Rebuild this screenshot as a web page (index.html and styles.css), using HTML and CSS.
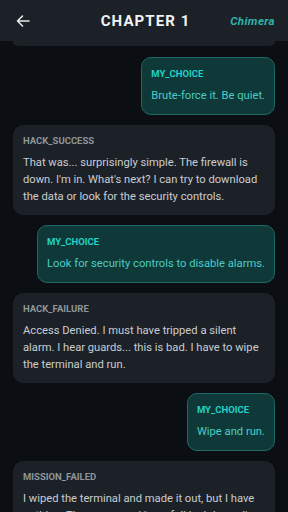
FILE: index.html
```html
<!DOCTYPE html>
<html>

<head>
  <meta charset="UTF-8">
  <title>Chapter 1</title>
  <link rel="stylesheet" href="styles.css">
</head>

<body>
  <div class="header">
    <a class="back">
      <svg width="16" height="16" viewBox="0 0 16 16">
        <path d="M14 8H2.5M7.5 3L2.5 8l5 5" fill="none" stroke="#e6e9ec" stroke-width="1.6" stroke-linecap="round" stroke-linejoin="round"/>
      </svg>
    </a>
    <div class="title">CHAPTER 1</div>
    <div class="brand">Chimera</div>
  </div>
  <div class="feed">
    <div class="card card-tail"></div>
    <div class="choice">
      <div class="label">MY_CHOICE</div>
      <div class="text">Brute-force it. Be quiet.</div>
    </div>
    <div class="card">
      <div class="label">HACK_SUCCESS</div>
      <div class="text">That was... surprisingly simple. The firewall is down. I'm in. What's next? I can try to download the data or look for the security controls.</div>
    </div>
    <div class="choice">
      <div class="label">MY_CHOICE</div>
      <div class="text">Look for security controls to disable alarms.</div>
    </div>
    <div class="card">
      <div class="label">HACK_FAILURE</div>
      <div class="text">Access Denied. I must have tripped a silent alarm. I hear guards... this is bad. I have to wipe the terminal and run.</div>
    </div>
    <div class="choice">
      <div class="label">MY_CHOICE</div>
      <div class="text">Wipe and run.</div>
    </div>
    <div class="card">
      <div class="label">MISSION_FAILED</div>
      <div class="text">I wiped the terminal and made it out, but I have nothing. The compound is on full lockdown. I've lost my only chance to get inside.</div>
    </div>
  </div>
</body>

</html>
```

FILE: styles.css
```css
html {
  height: 100%;
  overflow: hidden;
}

body {
  font-family: Roboto, "Noto Sans", sans-serif;
  margin: 0;
  background-color: #0b0f13;
  color: #c9cdd1;
  height: 100%;
  overflow: hidden;
}

.header {
  display: flex;
  align-items: center;
  height: 41px;
  padding: 0 13px 0 15px;
  background-color: #1b2126;
  box-sizing: border-box;
}

.back {
  display: flex;
  width: 16px;
  height: 16px;
}

.title {
  flex: 1;
  text-align: center;
  color: #f0f2f4;
  font-size: 15px;
  font-weight: 700;
  letter-spacing: 1.1px;
  padding-left: 30px;
}

.brand {
  color: #2fb3ab;
  font-size: 11.5px;
  font-weight: 700;
  font-style: italic;
  letter-spacing: 0.4px;
}

.feed {
  display: flex;
  flex-direction: column;
  gap: 10px;
  padding: 0 13px;
}

.card {
  background-color: #1c2127;
  border-radius: 10px;
  padding: 10px 10px 10px;
}

.card-tail {
  height: 5px;
  padding: 0;
  border-radius: 0 0 10px 10px;
  margin-bottom: 1px;
}

.choice {
  align-self: flex-end;
  background-color: #0f3839;
  border: 1px solid #1e6964;
  border-radius: 10px;
  padding: 10px 9px 10px;
}

.label {
  font-size: 9.5px;
  font-weight: 700;
  line-height: 12px;
  color: #8e959b;
  margin-bottom: 7px;
}

.text {
  font-size: 11.2px;
  line-height: 17px;
}

.choice .label {
  color: #22d2c6;
}

.choice .text {
  color: #4ccdc3;
}
```
